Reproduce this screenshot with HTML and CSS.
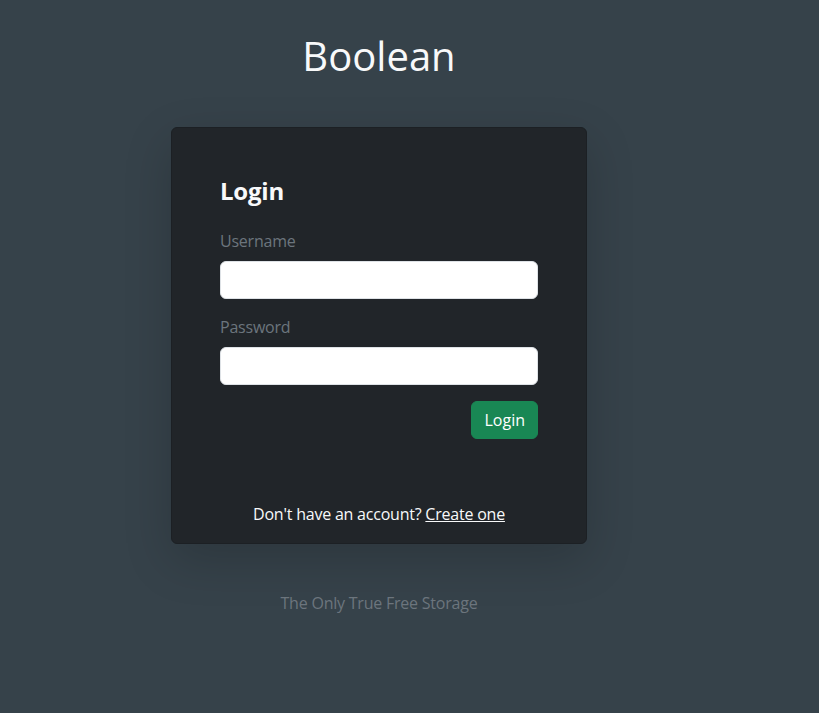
FILE: index.html
```html
<!DOCTYPE html>
<html lang="en">
<head>
<meta charset="utf-8">
<title>Boolean - Login</title>
<link rel="stylesheet" href="styles.css">
</head>
<body>
<main class="page">
  <h1 class="brand">Boolean</h1>
  <section class="card">
    <h3 class="card-title">Login</h3>
    <form class="form">
      <label class="label" for="username">Username</label>
      <input class="input" id="username" type="text">
      <label class="label" for="password">Password</label>
      <input class="input" id="password" type="password">
      <div class="actions">
        <button class="btn" type="button">Login</button>
      </div>
    </form>
    <p class="signup">Don't have an account? <a href="#" class="link">Create one</a></p>
  </section>
  <p class="tagline">The Only True Free Storage</p>
</main>
</body>
</html>
```

FILE: styles.css
```css
* { box-sizing: border-box; }
html, body { height: 100%; }
body {
  margin: 0;
  background: #36424a;
  font-family: "Open Sans", "Noto Sans", sans-serif;
  font-size: 16px;
  line-height: 1.5;
  letter-spacing: -0.22px;
  color: #f8f9fa;
}
.page {
  width: 416px;
  margin-left: 171px;
  padding-top: 32px;
  display: flex;
  flex-direction: column;
  align-items: stretch;
}
.brand {
  margin: 0 0 47px;
  font-size: 40px;
  font-weight: 500;
  line-height: 48px;
  letter-spacing: 0;
  text-align: center;
  color: #f8f9fa;
}
.card {
  background: #212529;
  border: 1px solid #1c2024;
  border-radius: 6px;
  padding: 48px 48px 17px;
  box-shadow: 0 16px 48px rgba(0, 0, 0, 0.175);
}
.card-title {
  margin: 0 0 24px;
  font-size: 24px;
  font-weight: 700;
  line-height: 29px;
  color: #f8f9fa;
}
.form { display: flex; flex-direction: column; }
.label {
  color: #6c757d;
  margin-bottom: 8px;
  line-height: 24px;
}
.input {
  height: 38px;
  margin: 0 0 16px;
  border: 1px solid #dee2e6;
  border-radius: 6px;
  background: #fff;
  font: inherit;
  padding: 6px 12px;
}
.actions { display: flex; justify-content: flex-end; }
.btn {
  height: 38px;
  padding: 0 12px;
  border: 1px solid #198754;
  border-radius: 6px;
  background: #198754;
  color: #fff;
  font: inherit;
  cursor: pointer;
}
.signup {
  margin: 63px 0 0;
  text-align: center;
  color: #f8f9fa;
  line-height: 24px;
}
.link { color: #f8f9fa; text-decoration: underline; }
.tagline {
  margin: 47px 0 0;
  text-align: center;
  color: #6c757d;
  line-height: 24px;
}
```
